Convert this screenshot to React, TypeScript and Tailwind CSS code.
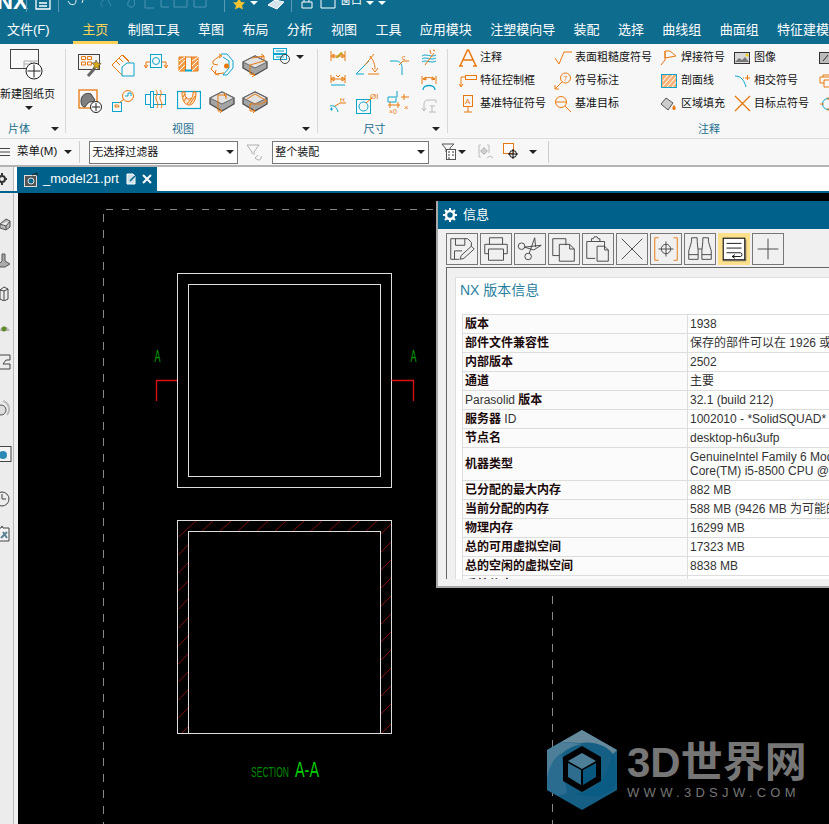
import type { ReactNode } from "react";

const OR = "#e9780c";
const CY = "#0aa5cc";
const DK = "#444";

function Ic({ w = 24, h = 24, children, className = "" }: { w?: number; h?: number; children: ReactNode; className?: string }) {
	return (
		<svg width={w} height={h} viewBox={`0 0 ${w} ${h}`} fill="none" className={`shrink-0 ${className}`}>
			{children}
		</svg>
	);
}

function Caret({ className = "" }: { className?: string }) {
	return <span className={`inline-block w-0 h-0 border-x-[4px] border-x-transparent border-t-[4px] border-t-[#222] ${className}`} />;
}

function Plus({ cx, cy, r = 5 }: { cx: number; cy: number; r?: number }) {
	return (
		<g>
			<circle cx={cx} cy={cy} r={r} fill="#fff" stroke="#222" />
			<path d={`M${cx - r + 1.5} ${cy}H${cx + r - 1.5}M${cx} ${cy - r + 1.5}V${cy + r - 1.5}`} stroke="#222" />
		</g>
	);
}

function GrayBox({ children }: { children?: ReactNode }) {
	return (
		<Ic w={26} h={24}>
			<path d="M1 9l12-6 12 6v6l-12 7-12-7z" fill="#a4a4a4" stroke="#4a4a4a" strokeWidth="1.300" />
			<path d="M1 9l12 6 12-6-12-6z" fill="#e2e2e2" stroke="#666" />
			{children}
		</Ic>
	);
}

const viewIcons: ReactNode[] = [
	<Ic key="a1">
		<rect x=".5" y="1.500" width="21" height="15" fill="#f4f4f4" stroke="#444" />
		<path d="M3.500 3.500h4v3h-4zM9.500 3.500h4v3h-4zM3.500 9h4v3h-4zM9.500 9h4v3h-4z" stroke={OR} />
		<path d="M10 23l7-8" stroke="#666" strokeWidth="3" />
		<path d="M18 7l1.500 3 3.500.5-2.200 2.500.7 3.500-3-2-3 1.500.8-3.500-2-2.500 3-.5z" fill="#d8a818" stroke="#333" strokeWidth=".5" />
	</Ic>,
	<Ic key="a2">
		<path d="M1 12L11 2l10 10-10 10z" stroke={OR} />
		<path d="M5 8l4 4M8 5l4 4M12 2l6 6" stroke={OR} />
		<path d="M11 23v-9l5-4h7v13z" fill="#f8f8f8" stroke={CY} />
	</Ic>,
	<Ic key="a3">
		<rect x="6.500" y="1.500" width="11" height="13" stroke={CY} />
		<circle cx="12" cy="8" r="3.500" stroke={CY} />
		<path d="M2 9v5M22 9v5M2 9h4M18 9h4M0 12l2 3 2-3M20 12l2 3 2-3" stroke={OR} />
	</Ic>,
	<Ic key="a4">
		<path d="M2 4h6.500v14H2zM14.500 4H21v14h-6.500z" fill="#f0a050" stroke={OR} />
		<path d="M2 8l6-4M2 13l6-6M2 18l6-6M15 8l6-4M15 13l6-6M15 18l6-6" stroke="#fff" />
		<path d="M8 4h7" stroke={OR} />
		<path d="M8 17.500h7" stroke={CY} strokeWidth="2" />
	</Ic>,
	<Ic key="a5">
		<path d="M11 1h6l6 7v7l-6 7h-4l6-7V8l-6-4" stroke={CY} />
		<path d="M11 2L3 8v3l5 1M9 5l3-2-3-2M3 13l-2 3 5 5 8-1M6 17l-1 4 4 1" stroke={OR} />
		<circle cx="16.500" cy="13" r="2.500" fill={OR} />
	</Ic>,
	<GrayBox key="a6">
		<path d="M10 5l12-2v5l-14 4v9l5 1M19 1l3 2-3 2M10 20l3 2-3 2" stroke={OR} />
	</GrayBox>,
	<Ic key="b1">
		<rect x="1" y="1" width="18" height="18" fill="#f8f8f8" stroke={OR} strokeWidth="1.300" />
		<path d="M3 12c0-6 5-9 10-7l4 6c-2 3-5 1-7 3l-3 4c-3 0-4-3-4-6z" fill="#808080" stroke="#444" />
		<Plus cx={18} cy={18} r={5.500} />
	</Ic>,
	<Ic key="b2">
		<rect x="1.500" y="13.500" width="9" height="9" stroke={CY} />
		<path d="M4 16l3 0c1 0 1 2 1 2l-4 0z" stroke={OR} />
		<circle cx="17" cy="7" r="5.500" stroke={OR} />
		<path d="M14 7h3V4h3v3" stroke={CY} />
		<path d="M8 14l5-4" stroke={OR} />
	</Ic>,
	<Ic key="b3">
		<rect x="1.500" y="5.500" width="20" height="10" stroke={CY} />
		<rect x="6.500" y="2.500" width="3" height="16" fill="#f8f8f8" stroke={CY} />
		<path d="M12 1c3 4-1 6 0 9s3 5 1 9M16 1c3 4-1 6 0 9s3 5 1 9" stroke={OR} />
	</Ic>,
	<Ic key="b4">
		<rect x=".5" y="2.500" width="23" height="17" stroke={CY} strokeWidth="1.200" />
		<path d="M5 3c0 9 3 13 7 13s7-4 7-13h-3c0 5-1 7-4 7s-4-2-4-7z" stroke={OR} fill="#fbe3cc" />
		<path d="M6 8l2-3M7 12l3-4M10 15l5-6M13 15l5-8" stroke={OR} />
	</Ic>,
	<GrayBox key="b5">
		<path d="M9 6h8v4M9 6v16h4M17 8l-2-2 2-2M11 20l2 2-2 2" stroke={OR} />
	</GrayBox>,
	<GrayBox key="b6">
		<path d="M5 10l8-5 12 7-6 3H8v7h5M11 20l2 2-2 2" stroke={OR} />
	</GrayBox>,
];

const dimColumns: ReactNode[][] = [
	[
		<Ic key="1" w={16} h={12}>
			<path d="M1 1v10M15 1v10M1 6h14M1 6l3-2v4zM15 6l-3-2v4z" stroke={OR} />
			<path d="M5 8l6-6 2 1-5 5z" fill="#caa21a" />
		</Ic>,
		<Ic key="2" w={16} h={12}>
			<path d="M1 1v8M15 1v8M1 5h14M1 5l3-2v4zM15 5l-3-2v4zM6 1l2 2 2-2" stroke={OR} />
			<path d="M1 11h14" stroke={CY} />
		</Ic>,
		<Ic key="3" w={18} h={14}>
			<path d="M1 8c4-1 7 1 8 6" stroke={CY} />
			<path d="M6 8l5-3h6" stroke={OR} />
			<text x="11" y="4" fontSize="7" fill={OR} fontFamily="Liberation Sans, sans-serif">R</text>
			<path d="M1 11h3M2.500 9.500v3" stroke={CY} />
		</Ic>,
	],
	[
		<Ic key="1" w={24} h={24}>
			<path d="M1 22L14 9M1 22h8" stroke={CY} />
			<path d="M10 13L19 2M15 4c4 5 5 9 5 13M13 22h11M17 16l3 4 3-4" stroke={OR} />
		</Ic>,
		<Ic key="2" w={24} h={22}>
			<rect x="1.500" y="7.500" width="14" height="14" stroke={CY} />
			<circle cx="8.500" cy="14.500" r="4.500" stroke={CY} />
			<path d="M11 11l6-5" stroke={OR} />
			<text x="15" y="7" fontSize="8" fill={OR} fontFamily="Liberation Sans, sans-serif">ØI</text>
		</Ic>,
	],
	[
		<Ic key="1" w={20} h={20}>
			<path d="M1 5h6c4 0 6 3 6 7v7" stroke={CY} />
			<path d="M10 9l4-4h6" stroke={OR} />
			<text x="13" y="4" fontSize="7" fill={OR} fontFamily="Liberation Sans, sans-serif">c</text>
		</Ic>,
		<Ic key="2" w={24} h={24}>
			<path d="M10 1v6H1v5h8V8" stroke={CY} />
			<path d="M1 15h12M3 12v6M11 12v6M14 7h8M17 4v6" stroke={OR} />
			<text x="2" y="24" fontSize="7" fill={OR} fontFamily="Liberation Sans, sans-serif">×0</text>
			<text x="17" y="20" fontSize="8" fill={OR} fontFamily="Liberation Sans, sans-serif">×</text>
		</Ic>,
	],
	[
		<Ic key="1" w={16} h={18}>
			<path d="M1 7c4-3 9 2 14-1M1 10c4-3 9 2 14-1M1 13c4-3 9 2 14-1" stroke={CY} />
			<path d="M4 16L13 4M9 1l1 4M12 1l2 1" stroke={OR} />
		</Ic>,
		<Ic key="2" w={16} h={18}>
			<path d="M1 2v8M15 2v8M2 5c4-2 8-2 12 0M2 5l3-2v3zM14 5l-3-2v3z" stroke={OR} />
			<path d="M2 16c0-6 12-6 12 0" stroke={CY} strokeWidth="1.300" />
		</Ic>,
		<Ic key="3" w={16} h={16}>
			<path d="M3 12V6c0-3 2-4 4-4h8M1 10l2 3 2-3M15 2v3M8 14h7M11 8v6M9 8h5" stroke="#bbb" />
		</Ic>,
	],
];

const noteColumns: { icon: ReactNode; text: string }[][] = [
	[
		{
			icon: (
				<Ic w={18} h={20}>
					<path d="M1 18L8.500 2h1L17 18M4 12h10M0 18h4M14 18h4" stroke={OR} strokeWidth="1.500" />
				</Ic>
			),
			text: "注释",
		},
		{
			icon: (
				<Ic w={18} h={14}>
					<rect x="6.500" y="1.500" width="11" height="4" stroke={OR} />
					<path d="M2 3h4M2 3v9M0 10l2 3 2-3" stroke={OR} />
				</Ic>
			),
			text: "特征控制框",
		},
		{
			icon: (
				<Ic w={18} h={18}>
					<rect x="4.500" y=".5" width="9" height="11" stroke={OR} />
					<text x="6" y="9" fontSize="8" fill={OR} fontFamily="Liberation Sans, sans-serif">A</text>
					<path d="M9 12v5M5 17h8" stroke={OR} />
				</Ic>
			),
			text: "基准特征符号",
		},
	],
	[
		{
			icon: (
				<Ic w={18} h={14}>
					<path d="M1 7l4 6L10 1h8" stroke={OR} />
				</Ic>
			),
			text: "表面粗糙度符号",
		},
		{
			icon: (
				<Ic w={18} h={18}>
					<circle cx="11.500" cy="6" r="5" stroke={OR} />
					<text x="9.500" y="8.500" fontSize="7" fill={OR} fontFamily="Liberation Sans, sans-serif">7</text>
					<path d="M8 10l-7 7M1 13v4h4" stroke={OR} />
				</Ic>
			),
			text: "符号标注",
		},
		{
			icon: (
				<Ic w={18} h={18}>
					<circle cx="7" cy="7" r="5.500" stroke={OR} />
					<path d="M2 7h10M11 11l6 6" stroke={OR} />
				</Ic>
			),
			text: "基准目标",
		},
	],
	[
		{
			icon: (
				<Ic w={18} h={16}>
					<path d="M5 1h5l6 5-11 2zM5 1v9L1 15" stroke={OR} />
				</Ic>
			),
			text: "焊接符号",
		},
		{
			icon: (
				<Ic w={16} h={14}>
					<rect x=".5" y=".5" width="15" height="13" fill="#f7b27a" stroke={CY} />
					<path d="M2 7l5-6M2 12l10-11M6 13L15 3M11 13l4-5" stroke="#fff" />
				</Ic>
			),
			text: "剖面线",
		},
		{
			icon: (
				<Ic w={18} h={14}>
					<path d="M1 7l5-6 7 5-5 7z" fill="#ccc" stroke="#555" />
					<path d="M14 8c-2 2-2.500 5 0 5s2-3 0-5z" fill={OR} />
				</Ic>
			),
			text: "区域填充",
		},
	],
	[
		{
			icon: (
				<Ic w={16} h={12}>
					<rect x=".5" y=".5" width="15" height="11" fill="#d8d8d8" stroke="#333" />
					<path d="M1 10l4-4 3 2 3-3 4 5z" fill="#777" />
					<circle cx="13" cy="3" r="1.500" fill="#f2d11a" />
				</Ic>
			),
			text: "图像",
		},
		{
			icon: (
				<Ic w={16} h={14}>
					<path d="M1 2c6 0 9 4 11 11" stroke={CY} />
					<path d="M11 4h5M13.500 1v5M9 4h1" stroke={OR} />
				</Ic>
			),
			text: "相交符号",
		},
		{
			icon: (
				<Ic w={17} h={17}>
					<path d="M1 1l15 15M16 1L1 16" stroke={OR} strokeWidth="1.300" />
				</Ic>
			),
			text: "目标点符号",
		},
	],
	[
		{
			icon: (
				<Ic w={12} h={12}>
					<rect x=".5" y=".5" width="14" height="11" fill="#bbb" stroke="#333" />
					<path d="M4 9l5-6" stroke="#333" />
				</Ic>
			),
			text: "",
		},
		{
			icon: (
				<Ic w={12} h={14}>
					<path d="M1 9V3h12M4 3V1h10M1 9h4v4h9V6H5v3" stroke={OR} />
				</Ic>
			),
			text: "",
		},
		{
			icon: (
				<Ic w={12} h={14}>
					<circle cx="9" cy="7" r="5.500" stroke={CY} />
					<path d="M9 0v3M9 11v3M1 7h4" stroke={OR} />
				</Ic>
			),
			text: "",
		},
	],
];

const menuItems = ["制图工具", "草图", "布局", "分析", "视图", "工具", "应用模块", "注塑模向导", "装配", "选择", "曲线组", "曲面组", "特征建模"];

const infoRows: [string, string[]][] = [
	["版本", ["1938"]],
	["部件文件兼容性", ["保存的部件可以在 1926 或更高版本中打开"]],
	["内部版本", ["2502"]],
	["通道", ["主要"]],
	["Parasolid 版本", ["32.1 (build 212)"]],
	["服务器 ID", ["1002010 - *SolidSQUAD*"]],
	["节点名", ["desktop-h6u3ufp"]],
	["机器类型", ["GenuineIntel Family 6 Model", "Core(TM) i5-8500 CPU @ 3.00GHz"]],
	["已分配的最大内存", ["882 MB"]],
	["当前分配的内存", ["588 MB (9426 MB 为可能的最大值)"]],
	["物理内存", ["16299 MB"]],
	["总的可用虚拟空间", ["17323 MB"]],
	["总的空闲的虚拟空间", ["8838 MB"]],
	["系统信息", [""]],
];

const dialogButtons: ReactNode[] = [
	<g key="save" stroke={DK}>
		<path d="M4 27V5h18l4 4v6M4 27h9" />
		<path d="M9 5v7h10V5M8 27v-9h8" />
		<path d="M14 27l1-4 11-10 3 3-11 10z" fill="#eee" />
	</g>,
	<g key="print" stroke={DK}>
		<path d="M9 11V4h14v7M4 21V11h24v10h-4M4 21h4" />
		<path d="M8 16h16v12H8z" />
	</g>,
	<g key="cut" stroke={DK}>
		<circle cx="7" cy="13" r="3.500" />
		<circle cx="14" cy="24" r="3.500" />
		<path d="M10 14l18-2-8 5zM15 21l6-17 1 10" />
	</g>,
	<g key="copy" stroke={DK}>
		<path d="M11 23H4V5h14v7" />
		<path d="M11 11h11l5 5v13H11zM22 11v5h5" />
	</g>,
	<g key="paste" stroke={DK}>
		<path d="M13 26H4V8h5V5h2l1-2h3l1 2h2v3h5v6" />
		<path d="M9 8h10M15 13h8l4 4v12H15zM23 13v4h4" />
	</g>,
	<g key="x" stroke={DK}>
		<path d="M5 5l22 22M27 5L5 27" />
	</g>,
	<g key="center">
		<path d="M8 4H4v24h4M24 4h4v24h-4" stroke={OR} />
		<circle cx="16" cy="16" r="5" stroke={DK} />
		<path d="M16 8v16M8 16h16" stroke={DK} />
	</g>,
	<g key="find" stroke={DK}>
		<path d="M4 27V18l3-10V4h6v4l1 10v9zM18 27v-9l1-10V4h6v4l3 10v9zM14 16h4M4 22h10M18 22h10" />
	</g>,
	<g key="wrap">
		<rect x="4.500" y="4.500" width="23" height="23" fill="#fff" stroke="#111" strokeWidth="1.200" />
		<path d="M4 28.500h24M28.500 6v23" stroke="#555" />
		<path d="M8 10h16M8 15h16M8 20h15c2 0 2 4 0 4h-9M17 22l-3 2 3 2" stroke="#111" />
	</g>,
	<g key="plus" stroke={DK}>
		<path d="M16 5v22M5 16h22" />
	</g>,
];

// sidebar drawings, with the gap above each in pixels
const sideIcons: { gap: string; icon: ReactNode }[] = [
	{ gap: "mt-[24px]", icon: <path d="M0 7l6-5 4 2v6l-4 3-6-2zM0 7l6 2 4-5M6 9v4" stroke="#555" fill="#b8b8b8" /> },
	{ gap: "mt-[19px]", icon: <path d="M-1 12l3-3V2h3v7l5 3-5 3H0z" stroke="#555" fill="#aaa" /> },
	{ gap: "mt-[17px]", icon: <path d="M0 5l4-3 4 2v10l-4 2-4-2zM4 6v10M0 5l4 1 4-2" stroke="#444" /> },
	{
		gap: "mt-[18px]",
		icon: (
			<g>
				<path d="M-1 12c2-5 8-7 11 0z" fill="#bbb" />
				<circle cx="4" cy="10" r="2.500" fill="#5f8a2a" />
			</g>
		),
	},
	{ gap: "mt-[19px]", icon: <path d="M-2 1h12v5H6l-3 4h7v5H-2" stroke="#444" /> },
	{
		gap: "mt-[30px]",
		icon: (
			<g>
				<circle cx="1" cy="10" r="5" fill="#ddd" stroke="#555" />
				<path d="M3 1c6 2 8 9 4 14" stroke="#bbb" strokeWidth="2" />
			</g>
		),
	},
	{
		gap: "mt-[30px]",
		icon: (
			<g>
				<rect x="-2" y=".5" width="13" height="15" fill="#f4f4f4" stroke="#444" />
				<circle cx="3" cy="9" r="4" fill="#2a8ab5" />
			</g>
		),
	},
	{
		gap: "mt-[29px]",
		icon: (
			<g stroke="#444">
				<circle cx="2" cy="8" r="7" />
				<path d="M2 3v5h4" />
			</g>
		),
	},
	{
		gap: "mt-[19px]",
		icon: (
			<g>
				<path d="M-2 2h3l1-2 1 2h6v13H-2" stroke="#444" fill="#f4f4f4" />
				<path d="M1 12l6-6M3 6l4 6" stroke="#5d8296" strokeWidth="2" />
			</g>
		),
	},
];

function Divider() {
	return <span className="w-px my-[5px] bg-[#d8d8d8] shrink-0" />;
}

function Ribbon() {
	return (
		<div className="flex h-[95px] bg-[#f7f7f7] border-b border-[#ddd] overflow-hidden shrink-0">
			{/* 片体 */}
			<div className="w-[65px] flex flex-col shrink-0 pt-[5px]">
				<div className="h-[70px] flex flex-col items-center">
					<Ic w={34} h={34} className="self-start ml-[10px]">
						<rect x=".5" y=".5" width="28" height="19" fill="#f9f9f9" stroke="#444" />
						<path d="M14 12h14M14 15h14M14 19V12M21 12v7" stroke="#aaa" />
						<Plus cx={24} cy={22} r={8} />
					</Ic>
					<span className="text-[11px] leading-[14px] mt-[4px] whitespace-nowrap text-[#111] -ml-[10px]">新建图纸页</span>
					<Caret className="mt-[5px] -ml-[8px]" />
				</div>
				<div className="flex items-center pl-[8px] h-[16px] text-[11px] text-[#1d6f8f] mt-[2px]">
					<span>片体</span>
					<Caret className="ml-[21px]" />
				</div>
			</div>
			<Divider />
			{/* 视图 */}
			<div className="w-[251px] shrink-0 flex flex-col">
				<div className="h-[77px] flex pl-[7px]">
					<div className="grid grid-cols-[repeat(6,33px)] grid-rows-[36px_36px] place-items-center pt-[3px]">{viewIcons}</div>
					<div className="flex items-center self-start mt-[4px] ml-[2px]">
						<Ic w={20} h={18}>
							<rect x=".5" y=".5" width="13" height="5" stroke={CY} />
							<rect x=".5" y="6.500" width="13" height="5" stroke={CY} />
							<path d="M3 3h8M3 9h8" stroke={CY} />
							<circle cx="12" cy="11" r="4.500" stroke="#444" />
						</Ic>
						<Caret className="ml-[3px]" />
					</div>
				</div>
				<div className="relative h-[16px] flex items-center justify-center text-[11px] text-[#1d6f8f]">
					<span className="-ml-[17px]">视图</span>
					<Caret className="absolute right-[7px] top-[6px]" />
				</div>
			</div>
			<Divider />
			{/* 尺寸 */}
			<div className="w-[129px] shrink-0 flex flex-col">
				<div className="h-[77px] flex pl-[11px] gap-[8px] pt-[4px]">
					<div className="w-[18px] flex flex-col justify-between items-center h-[64px] pt-[2px]">{dimColumns[0]}</div>
					<div className="w-[24px] flex flex-col justify-between items-center h-[68px] pt-[4px] pb-[2px]">{dimColumns[1]}</div>
					<div className="w-[24px] flex flex-col justify-between items-center h-[68px] pt-[8px] pb-[2px]">{dimColumns[2]}</div>
					<div className="w-[16px] flex flex-col justify-between items-center h-[66px] pt-[1px] ml-[2px]">{dimColumns[3]}</div>
				</div>
				<div className="relative h-[16px] flex items-center justify-center text-[11px] text-[#1d6f8f]">
					<span className="-ml-[16px]">尺寸</span>
					<Caret className="absolute right-[7px] top-[6px]" />
				</div>
			</div>
			<Divider />
			{/* 注释 */}
			<div className="flex-1 flex flex-col min-w-0">
				<div className="h-[77px] grid grid-cols-[95px_106px_73px_83px_20px] pl-[10px] pt-[2px]">
					{noteColumns.map((col, i) => (
						<div key={i} className="flex flex-col">
							{col.map((item, j) => (
								<div key={j} className="h-[23px] flex items-center text-[11px] text-[#111] whitespace-nowrap">
									<span className="w-[20px] mr-[2px] flex justify-center shrink-0">{item.icon}</span>
									{item.text}
								</div>
							))}
						</div>
					))}
				</div>
				<div className="h-[16px] flex items-center pl-[250px] text-[11px] text-[#1d6f8f]">注释</div>
			</div>
		</div>
	);
}

function Toolbar() {
	return (
		<div className="flex items-center h-[28px] bg-[#f7f7f7] border-b-2 border-[#b4b4b4] text-[11px] text-[#111] shrink-0">
			<Ic w={11} h={10}>
				<path d="M0 1.500h10M0 5h10M0 8.500h10" stroke="#444" />
			</Ic>
			<span className="ml-[6px] text-[11.500px]">菜单(M)</span>
			<Caret className="ml-[7px]" />
			<span className="w-px h-[22px] bg-[#ccc] ml-[7px]" />
			<div className="flex items-center justify-between w-[149px] h-[23px] border border-[#777] bg-white ml-[9px] pl-[2px] pr-[3px]">
				<span>无选择过滤器</span>
				<Caret />
			</div>
			<Ic w={17} h={17} className="ml-[8px]">
				<path d="M1 1h12L8 8v3M6 10V8L1 1" stroke="#b0b0b0" />
				<path d="M9 14l3-3M9 14l3 2c2 0 4-1 3-4" stroke="#b0b0b0" />
			</Ic>
			<div className="flex items-center justify-between w-[157px] h-[23px] border border-[#777] bg-white ml-[9px] pl-[2px] pr-[3px]">
				<span>整个装配</span>
				<Caret />
			</div>
			<Ic w={16} h={18} className="ml-[12px]">
				<path d="M1 1h12l-4 4v1" stroke="#555" />
				<path d="M1 1l4 5v3" stroke="#555" />
				<rect x="5.500" y="6.500" width="9" height="10" fill="#fff" stroke="#555" />
				<path d="M7 9h2M11 9h2M7 12h2M11 12h2M7 15h2" stroke="#333" />
			</Ic>
			<Caret className="ml-[1px]" />
			<Ic w={16} h={16} className="ml-[12px]">
				<path d="M3 1H1v12h2M9 1h2v8" stroke="#bbb" />
				<circle cx="6" cy="7" r="2.500" stroke="#aaa" />
				<path d="M6 3v8M2 7h8M9 14l3-2 3 2" stroke="#bbb" />
			</Ic>
			<Ic w={18} h={18} className="ml-[9px]">
				<rect x=".5" y=".5" width="10" height="10" fill="#fbfbfb" stroke={OR} />
				<circle cx="10" cy="11" r="3.500" stroke="#111" />
				<path d="M10 6v10M5 11h10" stroke="#111" />
			</Ic>
			<Caret className="ml-[8px]" />
			<span className="w-px h-[22px] bg-[#ccc] ml-[11px]" />
		</div>
	);
}

// latin words in the label column stay regular, the CJK part is bold
function RowLabel({ text }: { text: string }) {
	return (
		<>
			{text.split(/([A-Za-z]+)/).map((part, i) =>
				i % 2 === 1 ? (
					<span key={i} className="text-[#333]">
						{part}
					</span>
				) : (
					<span key={i} className="font-bold text-[#1c0a0a]">
						{part}
					</span>
				),
			)}
		</>
	);
}

function InfoDialog() {
	return (
		<div className="absolute left-[418px] top-[8px] w-[393px] h-[387px] bg-[#f0f0f0] border-b-[2px] border-l-[2px] border-[#a8a8a8] overflow-hidden">
			<div className="h-[28px] bg-[#00618a] flex items-center pl-[5px] text-white text-[13px]">
				<Ic w={14} h={14}>
					<circle cx="7" cy="7" r="4" stroke="#fff" strokeWidth="2.500" />
					<path d="M7 0v3M7 11v3M0 7h3M11 7h3M2 2l2 2M10 10l2 2M2 12l2-2M10 4l2-2" stroke="#fff" strokeWidth="2" />
				</Ic>
				<span className="ml-[6px]">信息</span>
			</div>
			<div className="flex gap-[2px] pl-[8px] pt-[4px] h-[38px]">
				{dialogButtons.map((icon, i) => (
					<span key={i} className={`w-[32px] h-[32px] ${i === 8 ? "bg-[#ffe08a] p-px" : "border border-[#777]"}`}>
						<svg width="30" height="30" viewBox="0 0 32 32" fill="none">
							{icon}
						</svg>
					</span>
				))}
			</div>
			<div className="ml-[8px] h-[312px] border-l border-t border-[#666] pl-[8px] pt-[9px] overflow-hidden">
				<div className="bg-white h-[400px] pl-[6px] border-l border-t border-[#ddd]">
					<div className="h-[36px] text-[14px] leading-[24px] text-[#2a7f9e] -ml-[2px]">NX 版本信息</div>
					<div className="w-[430px] border-t border-l border-[#ddd] text-[12px] leading-[14px]">
						{infoRows.map(([label, value]) => (
							<div key={label} className={`grid grid-cols-[225px_1fr] border-b border-[#ddd] ${value.length > 1 ? "h-[33px]" : "h-[19px]"}`}>
								<div className="bg-[#fbfbfb] flex items-center pl-[2px] border-r-[1px] border-[#ddd] whitespace-pre">
									<RowLabel text={label} />
								</div>
								<div className="flex flex-col justify-center pl-[2px] text-[#333] whitespace-nowrap">
									{value.map((v) => (
										<span key={v}>{v}</span>
									))}
								</div>
							</div>
						))}
					</div>
				</div>
			</div>
		</div>
	);
}

function Drawing() {
	const leftY = [555, 573, 591, 609, 628, 646, 664, 682, 700, 718];
	const rightY = [534, 552, 570, 588, 606, 624, 642, 660, 678, 696, 714];
	const topX = [213, 231, 249, 268, 286, 304, 322, 340, 359, 377];
	return (
		<svg width="811" height="631" viewBox="18 193 811 631" className="block">
			<path d="M106 209.500H436" stroke="#888" strokeDasharray="7 9" />
			<path d="M103.500 214V824" stroke="#888" strokeDasharray="8 8" />
			<path d="M552.500 596V824" stroke="#888" strokeDasharray="8 8" />
			<g stroke="#ddd" fill="none">
				<rect x="177.500" y="273.500" width="214" height="214" />
				<rect x="188.500" y="284.500" width="192" height="192" />
				<rect x="177.500" y="520.500" width="214" height="213" />
				<rect x="188.500" y="531.500" width="192" height="202" />
			</g>
			<path d="M156.500 401V380.500H177M391.500 380.500H413.500V401" stroke="#e01010" strokeWidth="1.300" fill="none" />
			<g stroke="#a01010" strokeWidth=".8">
				<path d="M178.500 537L196 521" />
				{topX.map((x) => (
					<path key={x} d={`M${x - 11} 531L${x} 521`} />
				))}
				{leftY.map((y) => (
					<path key={y} d={`M178.500 ${y}L188 ${y - 10}`} />
				))}
				{rightY.map((y) => (
					<path key={y} d={`M381 ${y}L391 ${y - 10}`} />
				))}
				<path d="M182 733L188 727M382 733L391 724" />
			</g>
			<g fontFamily="Liberation Sans, sans-serif">
				<text x="154.500" y="362" fontSize="17" textLength="6" lengthAdjust="spacingAndGlyphs" fill="#00a000">A</text>
				<text x="410.500" y="362" fontSize="17" textLength="6" lengthAdjust="spacingAndGlyphs" fill="#00a000">A</text>
				<text x="251" y="777" fontSize="15" textLength="38" lengthAdjust="spacingAndGlyphs" fill="#008a00">SECTION</text>
				<text x="295" y="777" fontSize="22" textLength="24" lengthAdjust="spacingAndGlyphs" fill="#00d000">A-A</text>
			</g>
		</svg>
	);
}

function Watermark() {
	return (
		<div className="absolute left-[528px] top-[536px] flex items-center text-[#767676]">
			<svg width="72" height="82" viewBox="0 0 72 82" className="shrink-0">
				<path d="M36 1l35 20v40L36 81 1 61V21z" fill="#155f84" />
				<path d="M36 1l35 20-4 4C60 16 48 12 34 14L15 13z" fill="#668a9c" />
				<path d="M1 21l14-8 23 2C22 16 8 28 3 47l-2 3z" fill="#4d7f99" />
				<path d="M1 50c2-12 6-20 14-26l6 40-9 3-11-6z" fill="#2a6c8f" />
				<path d="M67 25c4 10 4 22 1 35l-16 8-30-3c20 2 36-8 45-40z" fill="#0a5c85" />
				<path d="M36 17l19 11v24L36 63 17 52V28z" fill="#000" />
				<path d="M36 24l14 8-14 8-14-8z" fill="#4d7f99" />
				<path d="M22 34l13 7v15l-13-8z" fill="#2f6d8e" />
				<path d="M50 34l-13 7v15l13-8z" fill="#07577f" />
			</svg>
			<div className="ml-[9px] flex flex-col">
				<span className="text-[42px] leading-[42px] font-bold whitespace-nowrap">3D世界网</span>
				<span className="text-[13px] leading-[12px] mt-[3px] tracking-[4.300px] whitespace-nowrap">WWW.3DSJW.COM</span>
			</div>
		</div>
	);
}

export default function App() {
	return (
		<div className="w-[829px] h-[824px] overflow-hidden flex flex-col bg-white font-['Liberation_Sans','Noto_Sans_CJK_SC',sans-serif]">
			<div className="h-[22px] bg-[#0e6c8f] flex items-start overflow-hidden text-white shrink-0">
				<span className="text-[22px] leading-[20px] font-bold -mt-[8px] w-[29px] -ml-[3px]">NX</span>
				<span className="w-px h-[12px] bg-[#5b9ab5]" />
				<Ic w={16} h={10} className="ml-[8px]">
					<path d="M1 -4h14V9H1zM4 3h8M4 6h8" stroke="#fff" strokeWidth="1.300" />
				</Ic>
				<span className="w-px h-[12px] bg-[#5b9ab5] ml-[7px]" />
				<Ic w={50} h={10} className="ml-[7px]">
					<path d="M2 1l2 3c5 2 6-1 6-4M17 0l-1 3" stroke="#fff" strokeOpacity=".9" />
					<path d="M38 0c-4 1-4 6-1 7M42 0l3 6" stroke="#3c8aab" />
				</Ic>
				<Ic w={92} h={12} className="ml-[8px]">
					<path d="M6 0c-3 2-3 6 0 7s6-2 4-7M21 0v8h9M37 0v7h8M50 0v7h13V0M70 0v7h12V0" stroke="#4c93b0" />
				</Ic>
				<span className="w-px h-[12px] bg-[#5b9ab5] ml-[8px]" />
				<Ic w={14} h={10} className="ml-[7px]">
					<path d="M7 -2l2 4 4 .5-3 3 1 4-4-2-4 2 1-4-3-3 4-.5z" fill="#f2c230" />
				</Ic>
				<Caret className="!border-t-white ml-[4px] mt-[1px]" />
				<Ic w={18} h={10} className="ml-[9px]">
					<path d="M1 5l7-5 9 2-7 7z" fill="#d5e4ea" stroke="#fff" />
				</Ic>
				<span className="w-px h-[12px] bg-[#5b9ab5] ml-[6px]" />
				<Ic w={12} h={10} className="ml-[9px]">
					<path d="M1 2h10v6H1zM3 2V0M8 2V0" stroke="#fff" />
				</Ic>
				<Ic w={16} h={10} className="ml-[7px]">
					<path d="M1 0v8h14V0" stroke="#fff" />
				</Ic>
				<span className="text-[11px] leading-[10px] -mt-[5px] ml-[4px]">窗口</span>
				<Caret className="!border-t-white ml-[4px] mt-[1px]" />
				<Caret className="!border-t-white ml-[4px] mt-[1px]" />
			</div>
			<div className="h-[22px] bg-[#0e6c8f] flex items-start text-white text-[13px] leading-[16px] whitespace-nowrap shrink-0">
				<span className="pl-[7px] w-[73px]">文件(F)</span>
				<span className="w-[45px] h-[22px] text-center text-[#ffd257] border-b-[3px] border-[#ffd257]">主页</span>
				<div className="flex ml-[10px] gap-[18.350px]">
					{menuItems.map((m) => (
						<span key={m}>{m}</span>
					))}
				</div>
			</div>
			<Ribbon />
			<Toolbar />
			<div className="h-[26px] bg-white flex items-end shrink-0 border-b-2 border-[#00618a]">
				<div className="w-[14px] h-full bg-[#ececec] border-r border-[#bbb] flex items-center overflow-hidden">
					<Ic w={13} h={14}>
						<circle cx="2" cy="7" r="3" stroke="#333" strokeWidth="2" />
						<path d="M2 1v2M2 11v2M7 7h-1" stroke="#333" strokeWidth="2" />
					</Ic>
				</div>
				<div className="ml-[3px] w-[140px] h-[24px] bg-[#00618a] flex items-center text-white text-[13px] pl-[7px]">
					<Ic w={14} h={15}>
						<rect x=".5" y="3.500" width="12" height="11" fill="#555" stroke="#ddd" />
						<circle cx="7" cy="9" r="3" fill="#0a6a8e" stroke="#ddd" />
						<path d="M8 3l5-2v3" stroke="#222" />
					</Ic>
					<span className="ml-[5px]">_model21.prt</span>
					<Ic w={12} h={12} className="ml-[6px]">
						<path d="M2 1h6l2 2v8H2z" fill="#cfe0e8" stroke="#fff" />
						<path d="M5 8l5-5" stroke="#00618a" strokeWidth="1.500" />
					</Ic>
					<Ic w={10} h={10} className="ml-[5px]">
						<path d="M1 1l8 8M9 1L1 9" stroke="#fff" strokeWidth="2" />
					</Ic>
				</div>
			</div>
			<div className="flex flex-1 min-h-0">
				<div className="w-[18px] shrink-0 bg-[#f0f0f0]">
					<div className="w-[14px] h-full bg-[#ececec] border-r border-[#bbb] flex flex-col overflow-hidden">
						{sideIcons.map((s, i) => (
							<svg key={i} width="13" height="16" viewBox="0 0 13 16" fill="none" className={`shrink-0 ${s.gap}`}>
								{s.icon}
							</svg>
						))}
					</div>
				</div>
				<div className="relative flex-1 bg-black overflow-hidden">
					<Drawing />
					<InfoDialog />
					<Watermark />
				</div>
			</div>
		</div>
	);
}
